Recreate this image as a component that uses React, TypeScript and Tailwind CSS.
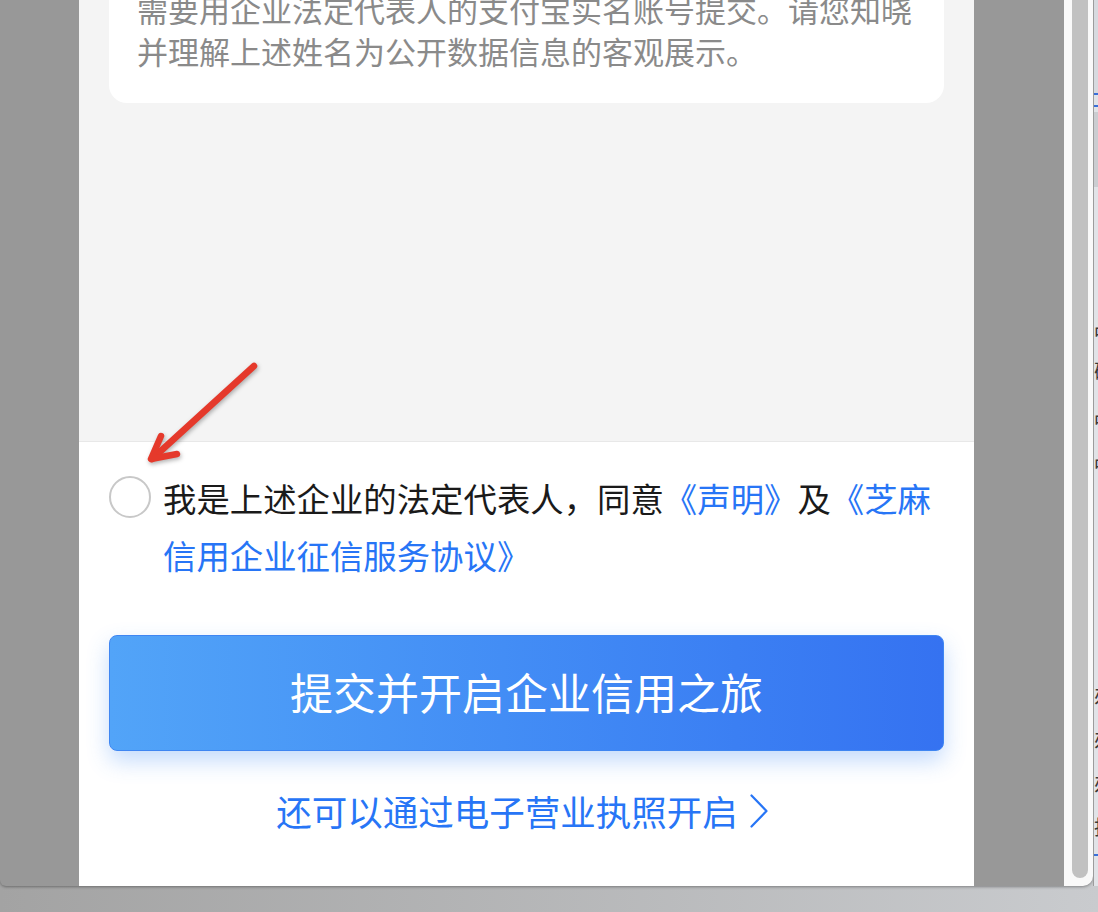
export default function App() {
  const glyphLine = (t: string) => (
    <div className="h-[20px] whitespace-nowrap text-[20px] leading-[20px] text-[#3a3a3a]">{t}</div>
  );
  return (
    <div className="w-[1098px] h-[912px] overflow-hidden bg-gradient-to-r from-[#a3a3a3] to-[#c9cbce] font-['Noto_Sans_CJK_SC',sans-serif]">
      <div className="flex h-[886px]">
        <div className="flex h-full w-[1093px] shrink-0 overflow-hidden rounded-bl-[6px] rounded-br-[10px] bg-[#989898] shadow-[0_1px_3px_rgba(0,0,0,0.35)]">
          <div className="w-[79px] shrink-0" />
          <div className="relative flex w-[895px] shrink-0 flex-col bg-white">
            <div className="h-[442px] shrink-0 overflow-hidden border-b border-[#e8e8e8] bg-[#f4f4f4] px-[30px]">
              <div className="-mt-[40px] rounded-[18px] bg-white pb-[31px] pl-[28px] pr-[20px] pt-[28px] text-[31px] leading-[42px] text-[#8a8a8a]">
                <div className="whitespace-nowrap">需要用企业法定代表人的支付宝实名账号提交。请您知晓</div>
                <div className="whitespace-nowrap">并理解上述姓名为公开数据信息的客观展示。</div>
              </div>
            </div>
            <div className="flex-1 px-[30px] pt-[27px]">
              <div className="flex gap-[12px]">
                <div className="mt-[7px] h-[42px] w-[42px] shrink-0 rounded-full border-2 border-[#c8c8c8]" />
                <p className="text-[33.4px] leading-[57px] text-[#1a1a1a]">
                  我是上述企业的法定代表人，同意<span className="text-[#2775f6]">《声明》</span>及<span className="text-[#2775f6]">《芝麻信用企业征信服务协议》</span>
                </p>
              </div>
              <div className="mt-[52px] flex h-[116px] items-center justify-center rounded-[8px] border border-[#3f86f2] bg-gradient-to-r from-[#52a4f8] to-[#3572f1] pb-[4px] text-[43px] text-white shadow-[0_10px_22px_rgba(60,135,245,0.3)]">
                提交并开启企业信用之旅
              </div>
              <div className="mt-[36px] flex h-[48px] items-center justify-center gap-[12px] pr-[9px] text-[35.5px] leading-[48px] text-[#2775f6]">
                <span>还可以通过电子营业执照开启</span>
                <svg width="18" height="34" viewBox="0 0 18 34" fill="none">
                  <path d="M1.5 1.5 L16.5 17 L1.5 32.5" stroke="#2775f6" strokeWidth="2.2" strokeLinecap="round" strokeLinejoin="round" />
                </svg>
              </div>
            </div>
            <svg
              className="absolute left-[61px] top-[355px] drop-shadow-[1px_2px_2px_rgba(0,0,0,0.3)]"
              width="125"
              height="115"
              viewBox="0 0 125 115"
              fill="none"
            >
              <path d="M114 11 L12 104" stroke="#e5392b" strokeWidth="6.5" strokeLinecap="round" />
              <path d="M21 81 L11 104 L37 99" stroke="#e5392b" strokeWidth="6.5" strokeLinecap="round" strokeLinejoin="round" />
            </svg>
          </div>
          <div className="w-[90px] shrink-0" />
          <div className="w-[29px] shrink-0 bg-[#f9f9f9] pl-[8px]">
            <div className="h-[878px] w-[16px] rounded-b-full bg-[#c1c1c1]" />
          </div>
        </div>
        <div className="flex h-full w-[5px] shrink-0 flex-col overflow-hidden border-l border-[#9c9c9c] bg-[#e1e3e7]">
          <div className="h-[93px] shrink-0 bg-[#d7dadf]" />
          <div className="h-[2px] shrink-0 bg-[#3a6fd8]" />
          <div className="h-[10px] shrink-0" />
          <div className="h-[2px] shrink-0 bg-[#3a6fd8]" />
          <div className="h-[5px] shrink-0" />
          <div className="h-[75px] shrink-0 bg-[#cbcdd1]" />
          <div className="h-[130px] shrink-0" />
          {glyphLine("品")}
          <div className="h-[24px] shrink-0" />
          {glyphLine("确")}
          <div className="h-[24px] shrink-0" />
          {glyphLine("品")}
          <div className="h-[24px] shrink-0" />
          {glyphLine("品")}
          <div className="h-[216px] shrink-0" />
          {glyphLine("办")}
          <div className="h-[24px] shrink-0" />
          {glyphLine("办")}
          <div className="h-[24px] shrink-0" />
          {glyphLine("办")}
          <div className="h-[24px] shrink-0" />
          {glyphLine("执")}
          <div className="h-[17px] shrink-0" />
          <div className="h-[2px] shrink-0 bg-[#3a6fd8]" />
        </div>
      </div>
    </div>
  );
}
